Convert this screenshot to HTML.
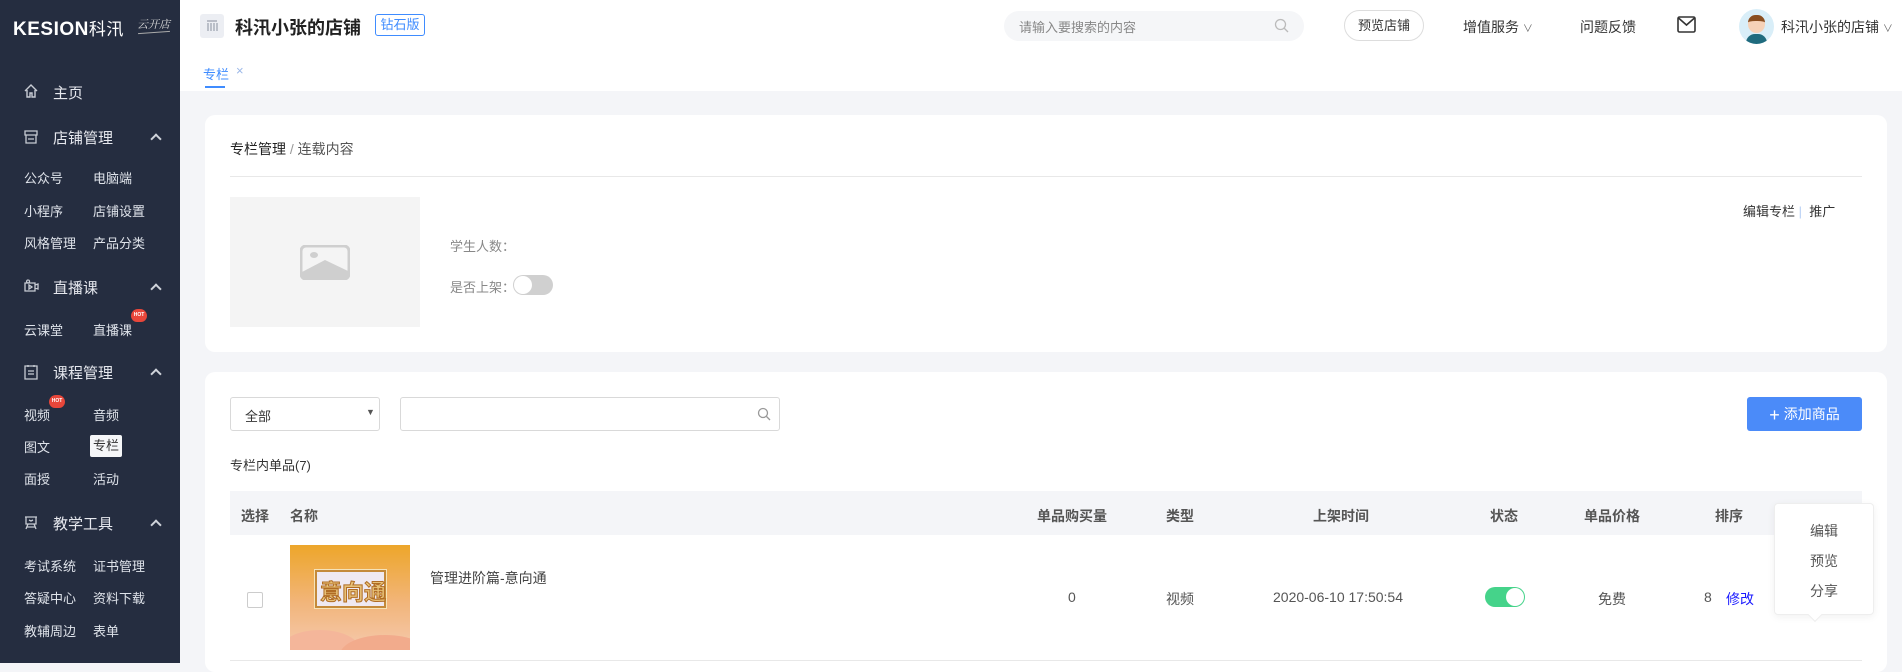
<!DOCTYPE html>
<html><head><meta charset="utf-8"><style>
*{margin:0;padding:0;box-sizing:border-box}
body{width:1902px;height:663px;overflow:hidden;background:#f4f5f8;font-family:"Liberation Sans","Noto Sans CJK SC",sans-serif;position:relative;color:#333}
.a{position:absolute;white-space:nowrap}
#side{position:absolute;left:0;top:0;width:180px;height:663px;background:#252d40;color:#dfe3ea}
#side .h{position:absolute;left:53px;font-size:15px;color:#e6e8ee}
#side .s{position:absolute;font-size:13px;color:#dfe3ea}
#side .c{position:absolute;left:152px;width:8px;height:8px;border-left:2px solid #cfd3da;border-top:2px solid #cfd3da;transform:rotate(45deg)}
.hot{position:absolute;width:16px;height:13px;background:#e8463a;border-radius:8px 8px 7px 7px;color:#fff;font-size:5px;line-height:13px;text-align:center;font-weight:bold}
#top{position:absolute;left:180px;top:0;width:1722px;height:55px;background:#fff}
#tabs{position:absolute;left:180px;top:55px;width:1722px;height:36px;background:#fff}
.card{position:absolute;left:205px;width:1682px;background:#fff;border-radius:10px}
.th{position:absolute;font-size:14px;font-weight:bold;color:#555;top:506px}
.td{position:absolute;font-size:14px;color:#555;top:589px}
</style></head><body>
<div id="side">
 <div class="a" style="left:13px;top:15px;font-size:19px;font-weight:bold;letter-spacing:0.5px;color:#fff">KESION<span style="font-weight:normal;font-size:17px">科汛</span></div>
 <div class="a" style="left:137px;top:16px;font-size:11px;font-style:italic;color:#ddd;font-family:'Liberation Serif','Noto Serif CJK SC',serif">云开店</div>
 <div class="a" style="left:138px;top:32px;width:32px;height:1px;background:#aaa;transform:rotate(-4deg)"></div>
 <svg class="a" style="left:23px;top:83px" width="16" height="16" viewBox="0 0 16 16" fill="none" stroke="#c8ccd4" stroke-width="1.4"><path d="M2 8 8 2l6 6M4 7v7h3v-4h2v4h3V7"/></svg>
 <div class="h" style="top:82px">主页</div>
 <svg class="a" style="left:23px;top:129px" width="16" height="15" viewBox="0 0 16 15" fill="none" stroke="#c8ccd4" stroke-width="1.3"><path d="M2 2h12v4H2zM3 6v8h10V6M5 10h6"/></svg>
 <div class="h" style="top:127px">店铺管理</div><div class="c" style="top:135px"></div>
 <div class="s" style="left:24px;top:168px">公众号</div><div class="s" style="left:93px;top:168px">电脑端</div>
 <div class="s" style="left:24px;top:201px">小程序</div><div class="s" style="left:93px;top:201px">店铺设置</div>
 <div class="s" style="left:24px;top:233px">风格管理</div><div class="s" style="left:93px;top:233px">产品分类</div>
 <svg class="a" style="left:23px;top:277px" width="16" height="16" viewBox="0 0 16 16" fill="none" stroke="#c8ccd4" stroke-width="1.3"><path d="M2 6h10v8H2zM12 8l3-1v5l-3-1M6 8v4l3-2zM5 3a1.5 1.5 0 1 0 .1 0"/></svg>
 <div class="h" style="top:277px">直播课</div><div class="c" style="top:285px"></div>
 <div class="s" style="left:24px;top:320px">云课堂</div><div class="s" style="left:93px;top:320px">直播课</div>
 <div class="hot" style="left:131px;top:309px">HOT</div>
 <svg class="a" style="left:23px;top:364px" width="16" height="16" viewBox="0 0 16 16" fill="none" stroke="#c8ccd4" stroke-width="1.3"><path d="M2 2h12v13H2zM5 1v2M11 1v2M5 7h6M5 10h6"/></svg>
 <div class="h" style="top:362px">课程管理</div><div class="c" style="top:370px"></div>
 <div class="s" style="left:24px;top:405px">视频</div><div class="s" style="left:93px;top:405px">音频</div>
 <div class="hot" style="left:49px;top:395px">HOT</div>
 <div class="s" style="left:24px;top:437px">图文</div>
 <div class="a" style="left:90px;top:435px;width:32px;height:22px;background:#f5f6f8;border-radius:2px;color:#333;font-size:13px;text-align:center;line-height:22px">专栏</div>
 <div class="s" style="left:24px;top:469px">面授</div><div class="s" style="left:93px;top:469px">活动</div>
 <svg class="a" style="left:23px;top:514px" width="16" height="16" viewBox="0 0 16 16" fill="none" stroke="#c8ccd4" stroke-width="1.3"><path d="M2 3h12M3 3v7h10V3M6 6l2 1 2-1M5 10l-2 5M11 10l2 5M4 13h8"/></svg>
 <div class="h" style="top:513px">教学工具</div><div class="c" style="top:521px"></div>
 <div class="s" style="left:24px;top:556px">考试系统</div><div class="s" style="left:93px;top:556px">证书管理</div>
 <div class="s" style="left:24px;top:588px">答疑中心</div><div class="s" style="left:93px;top:588px">资料下载</div>
 <div class="s" style="left:24px;top:621px">教辅周边</div><div class="s" style="left:93px;top:621px">表单</div>
</div>

<div id="top"></div>
<div class="a" style="left:200px;top:14px;width:24px;height:24px;background:#eceef3;border-radius:3px"></div>
<svg class="a" style="left:206px;top:20px" width="12" height="12" viewBox="0 0 12 12" stroke="#9aa0ad" stroke-width="1.2"><path d="M1 1h10M2 3v8M5 3v8M8 3v8M11 3v8"/></svg>
<div class="a" style="left:235px;top:14px;font-size:18px;font-weight:bold;color:#222">科汛小张的店铺</div>
<div class="a" style="left:375px;top:14px;width:50px;height:22px;border:1px solid #3f8cff;border-radius:3px;color:#3f8cff;font-size:13px;text-align:center;line-height:20px">钻石版</div>
<div class="a" style="left:1004px;top:11px;width:300px;height:30px;background:#f5f6f8;border-radius:15px"></div>
<div class="a" style="left:1019px;top:17px;font-size:13px;color:#888">请输入要搜索的内容</div>
<svg class="a" style="left:1274px;top:18px" width="15" height="15" viewBox="0 0 15 15" fill="none" stroke="#bbb" stroke-width="1.3"><circle cx="6.5" cy="6.5" r="5"/><path d="M10 10l4 4"/></svg>
<div class="a" style="left:1344px;top:10px;width:80px;height:31px;border:1px solid #ddd;border-radius:16px;font-size:13px;color:#333;text-align:center;line-height:29px">预览店铺</div>
<div class="a" style="left:1463px;top:17px;font-size:14px;color:#333">增值服务 <span style="font-size:10px;color:#666">∨</span></div>
<div class="a" style="left:1580px;top:17px;font-size:14px;color:#333">问题反馈</div>
<svg class="a" style="left:1677px;top:16px" width="19" height="17" viewBox="0 0 19 17" fill="none" stroke="#333" stroke-width="1.6"><rect x="1" y="1" width="17" height="15" rx="1.5"/><path d="M1.5 2 9.5 9 17.5 2"/></svg>
<div class="a" style="left:1739px;top:9px;width:35px;height:35px;border-radius:50%;background:#d9eef8;overflow:hidden">
 <div class="a" style="left:9px;top:6px;width:17px;height:18px;background:#f6d2b8;border-radius:8px 8px 9px 9px;border-top:6px solid #8a4e20"></div>
 <div class="a" style="left:7px;top:25px;width:21px;height:12px;background:#1f6b7e;border-radius:9px 9px 0 0"></div>
</div>
<div class="a" style="left:1781px;top:17px;font-size:14px;color:#333">科汛小张的店铺 <span style="font-size:10px;color:#666">∨</span></div>

<div id="tabs"></div>
<div class="a" style="left:203px;top:64px;font-size:13px;color:#3f8cff">专栏</div>
<div class="a" style="left:236px;top:63px;font-size:13px;color:#9bb8e8">×</div>
<div class="a" style="left:205px;top:86px;width:20px;height:2px;background:#3f8cff"></div>

<div class="card" style="top:115px;height:237px"></div>
<div class="a" style="left:230px;top:139px;font-size:14px;color:#222">专栏管理 <span style="color:#999">/</span> <span style="color:#555">连载内容</span></div>
<div class="a" style="left:230px;top:176px;width:1632px;height:1px;background:#e8e8e8"></div>
<div class="a" style="left:230px;top:197px;width:190px;height:130px;background:#f4f4f4"></div>
<svg class="a" style="left:300px;top:245px" width="50" height="35" viewBox="0 0 50 35"><rect x="1" y="1" width="48" height="33" rx="5" fill="none" stroke="#cfcfcf" stroke-width="3"/><path d="M2 33V27L25 15 48 26V33z" fill="#cfcfcf"/><ellipse cx="14" cy="10" rx="4" ry="3" fill="#cfcfcf"/></svg>
<div class="a" style="left:450px;top:236px;font-size:13px;color:#888">学生人数：</div>
<div class="a" style="left:450px;top:277px;font-size:13px;color:#888">是否上架：</div>
<div class="a" style="left:513px;top:275px;width:40px;height:20px;background:#d0d0d0;border-radius:10px"><div class="a" style="left:1px;top:1px;width:18px;height:18px;background:#fff;border-radius:50%"></div></div>
<div class="a" style="left:1743px;top:201px;font-size:13px;color:#333">编辑专栏 <span style="color:#b7cff5">|</span>&nbsp; 推广</div>

<div class="card" style="top:372px;height:300px"></div>
<div class="a" style="left:230px;top:397px;width:150px;height:34px;border:1px solid #d9d9d9;border-radius:3px;background:#fff"></div>
<div class="a" style="left:245px;top:406px;font-size:13px;color:#333">全部</div>
<div class="a" style="left:366px;top:407px;font-size:9px;color:#555">▼</div>
<div class="a" style="left:400px;top:397px;width:380px;height:34px;border:1px solid #d9d9d9;border-radius:3px;background:#fff"></div>
<svg class="a" style="left:757px;top:407px" width="14" height="14" viewBox="0 0 14 14" fill="none" stroke="#999" stroke-width="1.3"><circle cx="6" cy="6" r="4.5"/><path d="M9.5 9.5l3.5 3.5"/></svg>
<div class="a" style="left:1747px;top:397px;width:115px;height:34px;background:#4b8bf9;border-radius:3px;color:#fff;font-size:14px;text-align:center;line-height:34px"><span style="font-size:18px;vertical-align:-2px">+</span> 添加商品</div>
<div class="a" style="left:230px;top:455px;font-size:13px;color:#333">专栏内单品(7)</div>
<div class="a" style="left:230px;top:491px;width:1632px;height:44px;background:#f4f5f8"></div>
<div class="th" style="left:241px">选择</div>
<div class="th" style="left:290px">名称</div>
<div class="th" style="left:1037px">单品购买量</div>
<div class="th" style="left:1166px">类型</div>
<div class="th" style="left:1313px">上架时间</div>
<div class="th" style="left:1490px">状态</div>
<div class="th" style="left:1584px">单品价格</div>
<div class="th" style="left:1715px">排序</div>
<div class="a" style="left:230px;top:660px;width:1632px;height:1px;background:#e8e8e8"></div>
<div class="a" style="left:247px;top:592px;width:16px;height:16px;border:1px solid #ccc;border-radius:2px;background:#fff"></div>
<div class="a" style="left:290px;top:545px;width:120px;height:105px;background:linear-gradient(#eda62a,#f2b57a 55%,#f5c9ad);overflow:hidden">
 <div class="a" style="left:25px;top:25px;width:71px;height:38px;background:#efe9f1;border:2px solid #c48a3a;outline:1px solid #f6e3b8"></div>
 <div class="a" style="left:30px;top:30px;font-size:22px;font-weight:bold;color:#e7c178;-webkit-text-stroke:1px #b06c24">意向通</div>
 <div class="a" style="left:-10px;top:85px;width:80px;height:40px;background:#f4b69a;border-radius:50%"></div>
 <div class="a" style="left:50px;top:90px;width:90px;height:40px;background:#f2ab8c;border-radius:50%"></div>
</div>
<div class="a" style="left:430px;top:568px;font-size:14px;color:#444">管理进阶篇-意向通</div>
<div class="td" style="left:1068px">0</div>
<div class="td" style="left:1166px">视频</div>
<div class="td" style="left:1273px">2020-06-10 17:50:54</div>
<div class="a" style="left:1485px;top:587px;width:40px;height:20px;background:#45d38a;border-radius:10px"><div class="a" style="left:21px;top:1px;width:18px;height:18px;background:#fff;border-radius:50%"></div></div>
<div class="td" style="left:1598px">免费</div>
<div class="td" style="left:1704px">8</div>
<div class="td" style="left:1726px;color:#1a1aff">修改</div>
<div class="a" style="left:1774px;top:503px;width:100px;height:112px;background:#fff;border:1px solid #eee;border-radius:4px;box-shadow:0 2px 8px rgba(0,0,0,.06)"></div>
<div class="a" style="left:1810px;top:610px;width:10px;height:10px;background:#fff;border-right:1px solid #eee;border-bottom:1px solid #eee;transform:rotate(45deg)"></div>
<div class="a" style="left:1810px;top:521px;font-size:14px;color:#555">编辑</div>
<div class="a" style="left:1810px;top:551px;font-size:14px;color:#555">预览</div>
<div class="a" style="left:1810px;top:581px;font-size:14px;color:#555">分享</div>
</body></html>
